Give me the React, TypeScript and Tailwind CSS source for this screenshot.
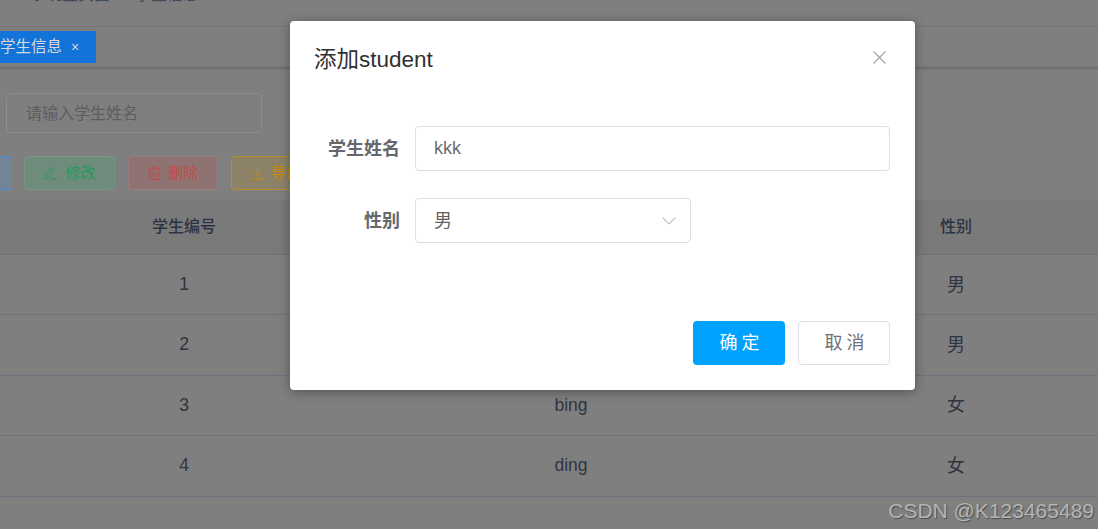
// App.tsx
const font = "font-['Liberation_Sans','Noto_Sans_CJK_SC',sans-serif]";

const students = [
    { id: 1, name: "", gender: "男" },
    { id: 2, name: "", gender: "男" },
    { id: 3, name: "bing", gender: "女" },
    { id: 4, name: "ding", gender: "女" },
];

function EditIcon() {
    return (
        <svg width="14" height="14" viewBox="0 0 14 14" fill="none" stroke="currentColor" strokeWidth="1">
            <path d="M1 10.5 L7.5 1.5 L10 3.2 L3.6 12.2 L1 13 Z" />
            <path d="M6.5 13 H13" />
        </svg>
    );
}

function TrashIcon() {
    return (
        <svg width="13" height="14" viewBox="0 0 13 14" fill="none" stroke="currentColor" strokeWidth="1">
            <path d="M0.5 3 H12.5 M4 3 V1 H9 V3 M2 3 V13.5 H11 V3 M5 6 V10.5 M8 6 V10.5" />
        </svg>
    );
}

function DownloadIcon() {
    return (
        <svg width="13" height="14" viewBox="0 0 13 14" fill="none" stroke="currentColor" strokeWidth="1">
            <path d="M6.5 1 V9.5 M2.5 5.5 L6.5 9.5 L10.5 5.5 M0.5 13 H12.5" />
        </svg>
    );
}

function ActionButton({ className, width, icon, label }: { className: string; width: string; icon?: React.ReactNode; label: string }) {
    return (
        <button className={`${width} h-[34px] shrink-0 rounded-[4px] border flex items-center justify-center gap-[7px] text-[15px] ${className}`}>
            {icon}
            <span>{label}</span>
        </button>
    );
}

export default function App() {
    return (
        <div className={`${font} relative w-[1098px] h-[529px] overflow-hidden bg-[#7f7f7f] text-[#2f3440]`}>
            {/* breadcrumb, mostly scrolled out of view */}
            <div className="h-[27px] overflow-hidden border-b border-[#7b7b7b] text-[#434a5a] text-base">
                <div className="-mt-[13px] flex items-center leading-[16px] pl-[30px] gap-[25px]">
                    <span>系统主页面</span>
                    <span>学生信息</span>
                </div>
            </div>

            {/* tab bar */}
            <div className="h-[40px] pt-[4px] bg-[#7f7f7f] shadow-[0_1px_3px_rgba(0,0,0,0.25)]">
                <div className="w-[96px] h-[32px] bg-[#1274d8] flex items-center text-[15.5px] text-[#d8d8d8]">
                    <span>学生信息</span>
                    <span className="ml-[9px] text-sm">×</span>
                </div>
            </div>

            {/* search */}
            <div className="pt-[26px] pl-[6px]">
                <div className="w-[256px] h-[40px] rounded-[4px] border border-[#8c8c94] flex items-center pl-[19px] pt-px text-base text-[#5c5c5f]">
                    请输入学生姓名
                </div>
            </div>

            {/* toolbar */}
            <div className="-ml-[78px] mt-[23px] flex gap-[12px]">
                <ActionButton width="w-[90px]" className="bg-[#738497] border-[#4f8fd8] text-[#2a7fd8]" label="新增" />
                <ActionButton width="w-[91px]" className="pl-px bg-[#6f8b7c] border-[#6e9a82] text-[#28995c]" icon={<EditIcon />} label="修改" />
                <ActionButton width="w-[90px]" className="ml-px bg-[#8f7373] border-[#9e7c7c] text-[#c44a4a]" icon={<TrashIcon />} label="删除" />
                <ActionButton width="w-[90px]" className="ml-px bg-[#8b8268] border-[#b8922f] text-[#cc8a00]" icon={<DownloadIcon />} label="导出" />
            </div>

            {/* table */}
            <div className="mt-[10px] -ml-[9px] w-[1158px] text-base">
                <div className="grid grid-cols-3 h-[55px] items-center text-center font-medium bg-[#7a7a7a] border-b border-[#6d707c] text-[#2c3344]">
                    <div>学生编号</div>
                    <div>学生姓名</div>
                    <div>性别</div>
                </div>
                {students.map(s => (
                    <div key={s.id} className="grid grid-cols-3 h-[60.4px] items-center text-center text-lg border-b border-[#6f7180]">
                        <div className="text-[17.5px]">{s.id}</div>
                        <div className="text-[17.5px] pl-[2px]">{s.name}</div>
                        <div>{s.gender}</div>
                    </div>
                ))}
            </div>

            {/* watermark */}
            <div className="absolute right-[4px] top-[499px] text-[21px] leading-[24px] text-[#b5b5b5] [text-shadow:1px_1px_1px_rgba(0,0,0,0.4)]">
                CSDN @K123465489
            </div>

            {/* dialog */}
            <div className="absolute left-[290px] top-[21px] w-[625px] h-[369px] rounded-[4px] bg-white shadow-[0_2px_12px_rgba(0,0,0,0.35)] flex flex-col text-[#606266]">
                <div className="relative h-[78px] pl-[24px] pt-[23px]">
                    <h2 className="text-[22.5px] leading-[32px] text-[#303133]">添加student</h2>
                    <svg className="absolute left-[583px] top-[30px]" width="13" height="13" viewBox="0 0 13 13" fill="none" stroke="#a0a3aa" strokeWidth="1.1">
                        <path d="M0.5 0.5 L12.5 12.5 M12.5 0.5 L0.5 12.5" />
                    </svg>
                </div>

                <div className="pt-[27px] pr-[25px] flex flex-col gap-[27px] text-lg">
                    <div className="flex items-center">
                        <label className="w-[110px] text-right font-bold text-[#65676c]">学生姓名</label>
                        <div className="ml-[15px] h-[45px] flex-1 rounded-[4px] border border-[#dcdfe6] flex items-center pl-[18px] pb-px text-[#6a6c72]">kkk</div>
                    </div>
                    <div className="flex items-center">
                        <label className="w-[110px] text-right font-bold text-[#65676c]">性别</label>
                        <div className="ml-[15px] h-[45px] w-[276px] rounded-[4px] border border-[#dcdfe6] flex items-center justify-between pl-[18px] pr-[14px]">
                            <span>男</span>
                            <svg width="14" height="8" viewBox="0 0 14 8" fill="none" stroke="#c0c4cc" strokeWidth="1.2">
                                <path d="M0.5 0.5 L7 7 L13.5 0.5" />
                            </svg>
                        </div>
                    </div>
                </div>

                <div className="mt-auto pb-[25px] pr-[25px] flex justify-end gap-[13px] text-lg">
                    <button className="w-[92px] h-[44px] pl-[5px] rounded-[4px] bg-[#00a2ff] text-white tracking-[4px]">确定</button>
                    <button className="w-[92px] h-[44px] pl-[5px] rounded-[4px] border border-[#dcdfe6] bg-white text-[#707276] tracking-[4px]">取消</button>
                </div>
            </div>
        </div>
    );
}
